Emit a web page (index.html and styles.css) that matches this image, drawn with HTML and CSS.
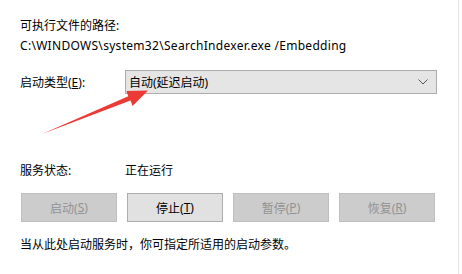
FILE: index.html
```html
<!DOCTYPE html>
<html lang="zh-CN">
<head>
<meta charset="utf-8">
<link rel="stylesheet" href="styles.css">
</head>
<body>
<div class="panel">
  <div class="line">可执行文件的路径:</div>
  <div class="line path">C:\WINDOWS\system32\SearchIndexer.exe /Embedding</div>
  <div class="type-row">
    <div class="label">启动类型(<u>E</u>):</div>
    <div class="select">
      <span>自动(延迟启动)</span>
      <svg class="chev" width="10" height="6" viewBox="0 0 10 6"><path d="M0.5 0.5 L5 5 L9.5 0.5" fill="none" stroke="#555" stroke-width="1"/></svg>
    </div>
  </div>
  <div class="status-row">
    <div class="label">服务状态:</div>
    <div>正在运行</div>
  </div>
  <div class="buttons">
    <div class="btn disabled">启动(<u>S</u>)</div>
    <div class="btn">停止(<u>T</u>)</div>
    <div class="btn disabled">暂停(<u>P</u>)</div>
    <div class="btn disabled">恢复(<u>R</u>)</div>
  </div>
  <div class="line note">当从此处启动服务时，你可指定所适用的启动参数。</div>
  <svg class="arrow" width="462" height="274" viewBox="0 0 462 274">
    <polygon points="42,134 128.3,96.2 126.4,91 148,90.5 132.6,106 130.5,100.6" fill="#ec3b36"/>
  </svg>
</div>
</body>
</html>
```

FILE: styles.css
```css
html, body {
  margin: 0;
  padding: 0;
  background: #ffffff;
}
body {
  width: 462px;
  height: 274px;
  overflow: hidden;
  font-family: "Noto Sans", "Noto Sans CJK SC", sans-serif;
  font-size: 12px;
  color: #000;
}
.panel {
  position: relative;
  height: 274px;
  box-sizing: border-box;
  padding: 16px 0 0 20px;
  border-right: 1px solid #e3e3e3;
  width: 459px;
}
.line {
  height: 20px;
  line-height: 20px;
  white-space: nowrap;
}
.path {
  letter-spacing: 0.3px;
}
u {
  text-decoration: underline;
  text-underline-offset: 1px;
}
.type-row {
  display: flex;
  align-items: center;
  margin-top: 14px;
  height: 24px;
}
.label {
  width: 105px;
}
.select {
  box-sizing: border-box;
  width: 312px;
  height: 24px;
  background: #e5e5e5;
  border: 1px solid #adadad;
  display: flex;
  align-items: center;
  justify-content: space-between;
  padding: 0 8px 0 3px;
}
.chev {
  display: block;
}
.status-row {
  display: flex;
  align-items: center;
  height: 20px;
  margin-top: 66px;
}
.buttons {
  display: grid;
  grid-template-columns: repeat(4, 96px);
  column-gap: 10px;
  margin-top: 13px;
  margin-left: 1px;
}
.btn {
  box-sizing: border-box;
  height: 29px;
  border: 1px solid #adadad;
  background: #e1e1e1;
  display: flex;
  align-items: center;
  justify-content: center;
}
.btn.disabled {
  background: #cccccc;
  border-color: #bfbfbf;
  color: #939393;
}
.note {
  margin-top: 13px;
}
.arrow {
  position: absolute;
  left: 0;
  top: 0;
  pointer-events: none;
}
```
